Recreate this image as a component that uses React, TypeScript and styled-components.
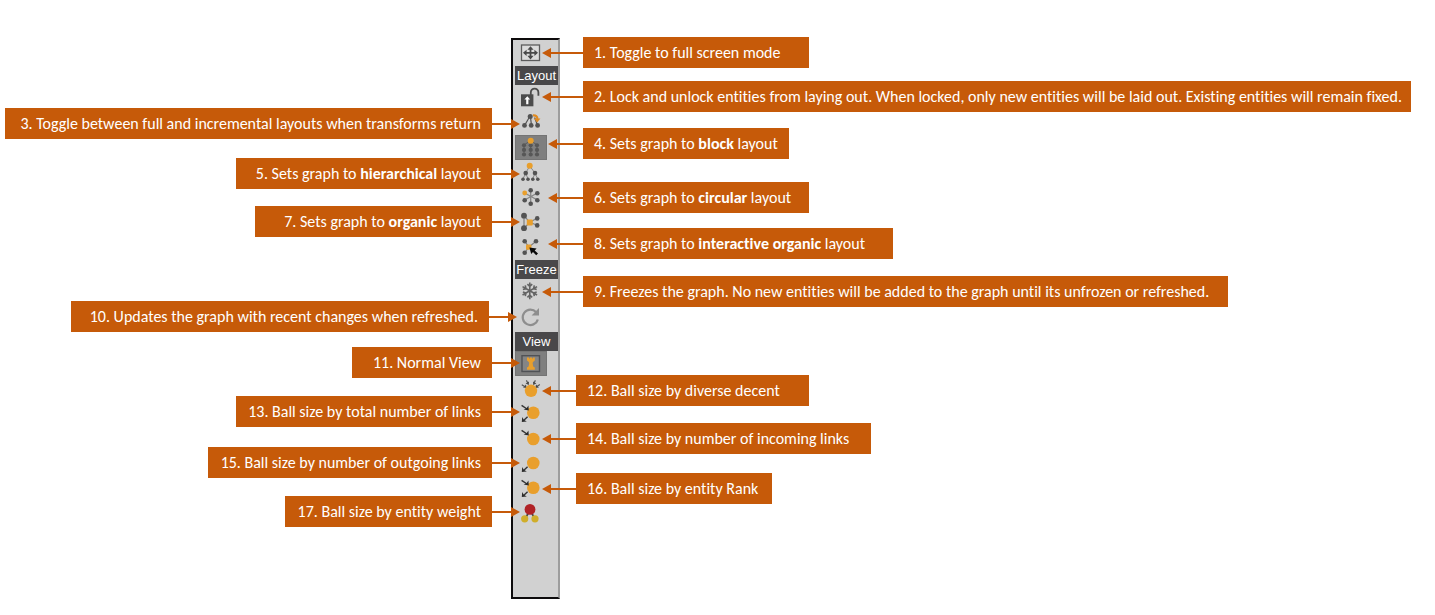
import React from 'react';
import styled, { createGlobalStyle, css } from 'styled-components';

const ORANGE = '#c65a09';
const INK = '#535353';
const GOLD = '#e99f2c';

const GlobalStyle = createGlobalStyle`
  *, *::before, *::after { box-sizing: border-box; }
  body { margin: 0; background: #fff; }
`;

const Page = styled.main`
  display: grid;
  grid-template-columns: minmax(0, 511fr) 49px minmax(0, 875fr);
  align-items: start;
  padding: 37px 0 16px;
`;

const NoteColumn = styled.ul<{ $side: 'left' | 'right' }>`
  display: flex;
  flex-direction: column;
  align-items: ${(p) => (p.$side === 'left' ? 'flex-end' : 'flex-start')};
  margin: 0;
  padding: 0;
  list-style: none;
`;

const Note = styled.li<{
  $side: 'left' | 'right';
  $gap: number;
  $width: number;
  $inset: number;
  $reach: number;
}>`
  position: relative;
  min-width: ${(p) => p.$width}px;
  margin-top: ${(p) => p.$gap}px;
  padding: 5px 11px;
  background: ${ORANGE};
  color: #fff;
  font: 16px/21px Carlito, Lato, sans-serif;
  font-variant-ligatures: none;

  &::before,
  &::after {
    content: '';
    position: absolute;
    z-index: 1;
    pointer-events: none;
  }
  &::before {
    top: 15px;
    width: ${(p) => p.$reach - 6}px;
    height: 2px;
    background: ${ORANGE};
  }
  &::after {
    top: 11px;
    border: solid transparent;
    border-width: 5px 0;
  }

  ${(p) =>
    p.$side === 'left'
      ? css`
          margin-right: ${p.$inset}px;
          padding-left: 8px;
          text-align: right;
          &::before { left: 100%; }
          &::after {
            left: calc(100% + ${p.$reach - 9}px);
            border-left: 9px solid ${ORANGE};
          }
        `
      : css`
          margin-left: ${p.$inset}px;
          padding-right: 8px;
          &::before { right: 100%; }
          &::after {
            right: calc(100% + ${p.$reach - 9}px);
            border-right: 9px solid ${ORANGE};
          }
        `}
`;

const Toolbar = styled.div`
  display: flex;
  flex-direction: column;
  margin-top: 1px;
  padding: 0 0 71px 2px;
  background: #d1d1d1;
  border: 2px solid #0d0b0c;
  border-right-color: #9d9d9d;
`;

const Group = styled.section<{ $end?: number }>`
  display: flex;
  flex-direction: column;
  padding-bottom: ${(p) => p.$end ?? 0}px;
`;

const GroupTitle = styled.h2`
  margin: 0;
  height: 19px;
  background: #49484a;
  color: #fff;
  text-align: center;
  font: 13px/19px 'Liberation Sans', Arial, sans-serif;
`;

const Tool = styled.button<{ $active?: boolean }>`
  display: block;
  width: 32px;
  height: 25px;
  padding: 0;
  border: 0;
  background: ${(p) => (p.$active ? '#7f7f7f' : 'transparent')};
  box-shadow: ${(p) => (p.$active ? 'inset 0 0 0 1px #747474' : 'none')};
  cursor: pointer;
`;

const Glyph = styled.svg`
  display: block;
  width: 32px;
  height: 25px;
`;

type Pt = [number, number];

const Dots = ({ at, r, fill = INK }: { at: Pt[]; r: number; fill?: string }) => (
  <>
    {at.map(([x, y]) => (
      <circle key={`${x}-${y}`} cx={x} cy={y} r={r} fill={fill} />
    ))}
  </>
);

const ArrowIn = () => (
  <>
    <path d="M6.6 4.4L12 8" stroke="#333" strokeWidth="1.4" />
    <path d="M13.8 9.4L13.4 4.6L11.6 7.2L8.6 8.4Z" fill="#2b2b2b" />
  </>
);
const ArrowOut = () => (
  <>
    <path d="M12.6 15.8L8.6 19.4" stroke="#333" strokeWidth="1.4" />
    <path d="M6.8 21L7.2 16L8.8 18.8L11.8 20.4Z" fill="#2b2b2b" />
  </>
);
const Ball = ({ y = 12.3 }: { y?: number }) => <circle cx="18.3" cy={y} r="6.3" fill={GOLD} />;

const icons = {
  fullscreen: (
    <>
      <rect x="6.5" y="5" width="18" height="15.5" fill="#dcdcdc" stroke="#5c5c5c" strokeWidth="1.3" />
      <path d="M15.5 8V18M9.5 12.8H21.5" stroke="#4a4a4a" strokeWidth="1.8" />
      <path d="M15.5 6.2L18.6 9.8H12.4ZM15.5 19.4L18.6 15.8H12.4ZM8 12.8L11.6 9.7V15.9ZM23 12.8L19.4 9.7V15.9Z" fill="#4a4a4a" />
    </>
  ),
  unlock: (
    <>
      <path d="M15.8 10V7.4A3.8 3.8 0 0 1 23.4 7.4V10.8" fill="none" stroke="#4c4c4c" strokeWidth="1.8" />
      <rect x="6" y="9.3" width="12.4" height="12" fill="#4c4c4c" />
      <path d="M12.3 11.2L15.2 14.6H13.4V19.3H11.2V14.6H9.4Z" fill="#fff" />
    </>
  ),
  incremental: (
    <>
      <path d="M14.8 6.5L9.5 15.5M15.4 6.5L16.5 15.5M19.6 7.5L22.6 15.5" stroke={INK} strokeWidth="1.2" />
      <Dots at={[[9.5, 15.4], [16.2, 15.4], [22.6, 15.4]]} r={2.4} />
      <circle cx="15.2" cy="6.4" r="2.5" fill={INK} />
      <path d="M18 5.4C20.8 5 22.4 6.4 22.4 9" fill="none" stroke="#e08a20" strokeWidth="2.2" />
      <path d="M18.8 8.4H25.4L22.2 12.6Z" fill="#e08a20" />
    </>
  ),
  block: (
    <>
      <path d="M15.7 5.5L9 10V20M15.7 5.5V20M15.7 5.5L22 10V20" fill="none" stroke="#5c5c5c" />
      <Dots
        at={[[9, 10.3], [15.7, 10.3], [22, 10.3], [9, 14.9], [15.7, 14.9], [22, 14.9], [9, 19.5], [15.7, 19.5], [22, 19.5]]}
        r={2.1}
        fill="#575757"
      />
      <circle cx="15.7" cy="5.7" r="3" fill={GOLD} />
    </>
  ),
  hierarchical: (
    <>
      <path d="M14.7 6L10.7 13L8 19M14.7 6L20 13L22.7 19M10.7 13L13 19M20 13L17.7 19" fill="none" stroke="#888" />
      <Dots at={[[10.7, 13.1], [20, 13.1]]} r={2.3} />
      <Dots at={[[8, 19.3], [13, 19.3], [17.8, 19.3], [22.8, 19.3]]} r={1.8} />
      <circle cx="14.7" cy="5.7" r="3" fill={GOLD} />
    </>
  ),
  circular: (
    <>
      <path d="M15.7 5.3V18.7M9.7 8L22.3 15M22.3 8L9.7 15" stroke="#888" strokeWidth="1.3" />
      <Dots at={[[15.7, 5.3], [15.7, 18.7], [22.3, 8.2], [22.3, 15.2], [9.7, 15.2]]} r={2.3} />
      <circle cx="9.7" cy="8" r="2.4" fill={GOLD} />
    </>
  ),
  organic: (
    <>
      <path d="M9 5.7V18.3L14.7 12.3L22 15.3M9 5.7L14.7 12.3L22 8.3" fill="none" stroke="#808080" strokeWidth="1.2" />
      <Dots at={[[9, 5.7], [9, 18.2]]} r={2.9} />
      <Dots at={[[22.2, 8.4], [22.2, 15.4]]} r={2.3} />
      <rect x="11.8" y="9.5" width="6" height="6" rx="1" fill={GOLD} />
    </>
  ),
  interactive: (
    <>
      <path d="M9.7 6.3L14 12L21 6.3M9.7 17.7L14 12" fill="none" stroke="#808080" strokeWidth="1.2" />
      <Dots at={[[9.7, 6.3], [21, 6.3], [9.7, 17.7]]} r={2.3} />
      <rect x="11" y="9.4" width="5.4" height="5.4" rx="1" fill={GOLD} />
      <path d="M14.4 12.6L21.6 13.6L19.7 15.4L23 18.6L21.2 20.2L18 17L16.2 19Z" fill="#0a0a0a" />
    </>
  ),
  freeze: (
    <g transform="translate(14.8 11.8)" stroke="#646464" strokeWidth="1.6" fill="none">
      {[0, 60, 120, 180, 240, 300].map((a) => (
        <path key={a} transform={`rotate(${a})`} d="M0 0V-8.4M-2.4 -6.6L0 -4.4L2.4 -6.6" />
      ))}
    </g>
  ),
  refresh: (
    <>
      <path d="M21.2 8.2A7.7 7.7 0 1 0 22.8 15.5" fill="none" stroke="#8e8e8e" strokeWidth="2.2" />
      <path d="M24 4V11.4H16.6Z" fill="#8e8e8e" />
    </>
  ),
  normal: (
    <>
      <rect x="7" y="4.7" width="17.5" height="15.8" fill="#858585" stroke="#505256" strokeWidth="1.4" />
      <path d="M12 6.4H14V7.4H15V6.4H17V7.4H18V6.4H19.8V9.4L18 11L17.6 12L18.2 15.4L19.8 16.6V18.8H12V16.6L13.6 15.4L14.2 12L13.8 11L12 9.4Z" fill={GOLD} />
    </>
  ),
  diverse: (
    <>
      <path d="M6.8 8.8L9.6 10.6M11.4 4.4L12.8 7M20.4 4.4L19 7M24.8 8.6L22 10.6" stroke="#555" strokeWidth="1.2" />
      <path
        d="M11.6 12L8 11.6L11 8.6ZM13.8 9L10.6 7.6L14 5.4ZM18.2 9L21.4 7.6L18 5.4ZM20.4 12L24 11.6L21 8.6Z"
        fill="#4a4a4a"
      />
      <circle cx="16" cy="14.8" r="6.2" fill={GOLD} />
    </>
  ),
  total: (<><Ball y={11.8} /><ArrowIn /><ArrowOut /></>),
  incoming: (<><Ball y={13} /><ArrowIn /></>),
  outgoing: (<><Ball y={12} /><ArrowOut /></>),
  rank: (<><Ball y={11.8} /><ArrowIn /><ArrowOut /></>),
  weight: (
    <>
      <path d="M15 9L10 18M15 9L20 18" stroke="#444" strokeWidth="1.6" />
      <Dots at={[[9.7, 17.8], [20, 17.8]]} r={3.6} fill="#d0ae2a" />
      <circle cx="15" cy="8.4" r="5.4" fill="#b02226" />
    </>
  ),
};

type IconName = keyof typeof icons;

const groups: { title?: string; end?: number; tools: [IconName, string][] }[] = [
  { end: 1, tools: [['fullscreen', 'Full screen']] },
  {
    title: 'Layout',
    tools: [
      ['unlock', 'Lock entities'],
      ['incremental', 'Incremental layout'],
      ['block', 'Block layout'],
      ['hierarchical', 'Hierarchical layout'],
      ['circular', 'Circular layout'],
      ['organic', 'Organic layout'],
      ['interactive', 'Interactive organic layout'],
    ],
  },
  { title: 'Freeze', end: 3, tools: [['freeze', 'Freeze graph'], ['refresh', 'Refresh graph']] },
  {
    title: 'View',
    tools: [
      ['normal', 'Normal view'],
      ['diverse', 'Diverse descent'],
      ['total', 'Total links'],
      ['incoming', 'Incoming links'],
      ['outgoing', 'Outgoing links'],
      ['rank', 'Entity rank'],
      ['weight', 'Entity weight'],
    ],
  },
];

const active: IconName[] = ['block', 'normal'];

interface NoteData {
  gap: number;
  width: number;
  inset: number;
  reach: number;
  text: React.ReactNode;
}

const leftNotes: NoteData[] = [
  { gap: 71, width: 487, inset: 19, reach: 28, text: '3. Toggle between full and incremental layouts when transforms return' },
  { gap: 19, width: 256, inset: 19, reach: 28, text: <>5. Sets graph to <b>hierarchical</b> layout</> },
  { gap: 17, width: 237, inset: 19, reach: 28, text: <>7. Sets graph to <b>organic</b> layout</> },
  { gap: 64, width: 418, inset: 22, reach: 28, text: '10. Updates the graph with recent changes when refreshed.' },
  { gap: 15, width: 140, inset: 19, reach: 28, text: '11. Normal View' },
  { gap: 18, width: 256, inset: 19, reach: 28, text: '13. Ball size by total number of links' },
  { gap: 20, width: 284, inset: 19, reach: 28, text: '15. Ball size by number of outgoing links' },
  { gap: 18, width: 207, inset: 19, reach: 28, text: '17. Ball size by entity weight' },
];

const rightNotes: NoteData[] = [
  { gap: 0, width: 226, inset: 23, reach: 41, text: '1. Toggle to full screen mode' },
  {
    gap: 13, width: 828, inset: 23, reach: 41,
    text: '2. Lock and unlock entities from laying out. When locked, only new entities will be laid out. Existing entities will remain fixed.',
  },
  { gap: 16, width: 206, inset: 23, reach: 35, text: <>4. Sets graph to <b>block</b> layout</> },
  { gap: 23, width: 226, inset: 23, reach: 35, text: <>6. Sets graph to <b>circular</b> layout</> },
  { gap: 15, width: 310, inset: 23, reach: 35, text: <>8. Sets graph to <b>interactive organic</b> layout</> },
  {
    gap: 17, width: 645, inset: 23, reach: 41,
    text: '9. Freezes the graph. No new entities will be added to the graph until its unfrozen or refreshed.',
  },
  { gap: 68, width: 233, inset: 16, reach: 34, text: '12. Ball size by diverse decent' },
  { gap: 17, width: 295, inset: 16, reach: 34, text: '14. Ball size by number of incoming links' },
  { gap: 19, width: 196, inset: 16, reach: 34, text: '16. Ball size by entity Rank' },
];

const Notes = ({ side, items }: { side: 'left' | 'right'; items: NoteData[] }) => (
  <NoteColumn $side={side}>
    {items.map((n, i) => (
      <Note key={i} $side={side} $gap={n.gap} $width={n.width} $inset={n.inset} $reach={n.reach}>
        {n.text}
      </Note>
    ))}
  </NoteColumn>
);

export default function App() {
  return (
    <>
      <GlobalStyle />
      <Page>
        <Notes side="left" items={leftNotes} />
        <Toolbar role="toolbar" aria-orientation="vertical">
          {groups.map((g, i) => (
            <Group key={i} $end={g.end}>
              {g.title && <GroupTitle>{g.title}</GroupTitle>}
              {g.tools.map(([name, label]) => (
                <Tool key={name} type="button" aria-label={label} $active={active.includes(name)}>
                  <Glyph viewBox="0 0 32 25" aria-hidden="true">{icons[name]}</Glyph>
                </Tool>
              ))}
            </Group>
          ))}
        </Toolbar>
        <Notes side="right" items={rightNotes} />
      </Page>
    </>
  );
}
